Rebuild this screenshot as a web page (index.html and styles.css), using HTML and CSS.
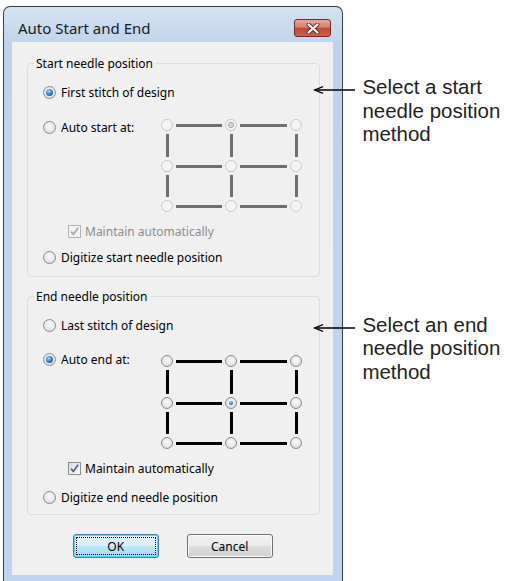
FILE: index.html
```html
<!DOCTYPE html>
<html lang="en">
<head>
    <meta charset="UTF-8">
    <title>Auto Start and End</title>
    <link rel="stylesheet" href="styles.css">
</head>
<body>
<div class="page">
    <div class="window">
        <div class="titlebar">
            <span class="title">Auto Start and End</span>
            <span class="close">
                <svg width="14" height="11" viewBox="0 0 14 11">
                    <path d="M2.5 1.5 L11.5 9.5 M11.5 1.5 L2.5 9.5" stroke="#5a2a24" stroke-width="4" stroke-linecap="round"/>
                    <path d="M2.5 1.5 L11.5 9.5 M11.5 1.5 L2.5 9.5" stroke="#fff" stroke-width="2.2" stroke-linecap="round"/>
                </svg>
            </span>
        </div>
        <div class="client">
            <fieldset class="group group-start">
                <legend>Start needle position</legend>
                <div class="option"><span class="radio on"></span>First stitch of design</div>
                <div class="auto">
                    <div class="option"><span class="radio"></span>Auto start at:</div>
                    <div class="grid off">
                        <span class="radio"></span><span class="h"></span><span class="radio on"></span><span class="h"></span><span class="radio"></span>
                        <span class="v"></span><span></span><span class="v"></span><span></span><span class="v"></span>
                        <span class="radio"></span><span class="h"></span><span class="radio"></span><span class="h"></span><span class="radio"></span>
                        <span class="v"></span><span></span><span class="v"></span><span></span><span class="v"></span>
                        <span class="radio"></span><span class="h"></span><span class="radio"></span><span class="h"></span><span class="radio"></span>
                    </div>
                </div>
                <div class="option check disabled">
                    <span class="box"><svg width="11" height="11" viewBox="0 0 11 11"><path d="M2 5.6 L4.4 8.4 L9.2 1.8" fill="none" stroke="currentColor" stroke-width="1.7"/></svg></span>Maintain automatically
                </div>
                <div class="option last"><span class="radio"></span>Digitize start needle position</div>
            </fieldset>

            <fieldset class="group group-end">
                <legend>End needle position</legend>
                <div class="option"><span class="radio"></span>Last stitch of design</div>
                <div class="auto">
                    <div class="option"><span class="radio on"></span>Auto end at:</div>
                    <div class="grid">
                        <span class="radio"></span><span class="h"></span><span class="radio"></span><span class="h"></span><span class="radio"></span>
                        <span class="v"></span><span></span><span class="v"></span><span></span><span class="v"></span>
                        <span class="radio"></span><span class="h"></span><span class="radio on"></span><span class="h"></span><span class="radio"></span>
                        <span class="v"></span><span></span><span class="v"></span><span></span><span class="v"></span>
                        <span class="radio"></span><span class="h"></span><span class="radio"></span><span class="h"></span><span class="radio"></span>
                    </div>
                </div>
                <div class="option check">
                    <span class="box"><svg width="11" height="11" viewBox="0 0 11 11"><path d="M2 5.6 L4.4 8.4 L9.2 1.8" fill="none" stroke="currentColor" stroke-width="1.7"/></svg></span>Maintain automatically
                </div>
                <div class="option last"><span class="radio"></span>Digitize end needle position</div>
            </fieldset>

            <div class="buttons">
                <button class="btn default">OK</button>
                <button class="btn">Cancel</button>
            </div>
        </div>
    </div>

    <div class="notes">
        <div class="note">
            <svg width="42" height="10" viewBox="0 0 42 10">
                <path d="M1.5 5 H42" stroke="#000" stroke-width="1.6"/>
                <path d="M10 1.6 L1.5 5 L10 8.4" fill="none" stroke="#000" stroke-width="1.3"/>
            </svg>
            <p>Select a start needle position method</p>
        </div>
        <div class="note note-end">
            <svg width="42" height="10" viewBox="0 0 42 10">
                <path d="M1.5 5 H42" stroke="#000" stroke-width="1.6"/>
                <path d="M10 1.6 L1.5 5 L10 8.4" fill="none" stroke="#000" stroke-width="1.3"/>
            </svg>
            <p>Select an end needle position method</p>
        </div>
    </div>
</div>
</body>
</html>
```

FILE: styles.css
```css
html, body {
    margin: 0;
    height: 100%;
    overflow: hidden;
    background: #fff;
}

body {
    font-family: "Noto Sans", sans-serif;
    font-size: 12px;
    color: #000;
}

.page {
    display: flex;
    align-items: flex-start;
}

/* window frame */
.window {
    margin: 6px 0 0 3px;
    width: 341px;
    height: 575px;
    box-sizing: border-box;
    border: 1px solid #2f3f52;
    border-bottom: 0;
    border-radius: 7px 7px 0 0;
    padding: 0 9px 0 8px;
    background: linear-gradient(#d5e3f2, #bfd4ec 36px, #bfd5ee);
}

.titlebar {
    height: 35px;
    box-sizing: border-box;
    padding: 7px 2px 0 6px;
    display: flex;
    align-items: center;
    justify-content: space-between;
}

.title {
    font-size: 15px;
    color: #1a1a1a;
}

.close {
    width: 37px;
    height: 18px;
    box-sizing: border-box;
    border: 1px solid #6d2a25;
    border-radius: 3px;
    background: linear-gradient(#e9aa9a, #d6806c 45%, #c14a31 52%, #d2614a);
    display: flex;
    align-items: center;
    justify-content: center;
}

.client {
    height: 533px;
    box-sizing: border-box;
    background: #f0f0f0;
    padding-top: 14px;
}

/* group boxes */
.group {
    margin: 0 13px 0 15px;
    padding: 14px 0 10px 15px;
    border: 1px solid #d5dfe5;
    border-radius: 4px;
    display: flex;
    flex-direction: column;
    align-items: flex-start;
}

.group legend {
    margin-left: -9px;
    padding: 0 2px;
    line-height: 15px;
}

.group-start {
    padding-bottom: 11px;
}

.group-end {
    margin-top: 12px;
    padding-bottom: 9px;
}

.option {
    display: flex;
    align-items: center;
    gap: 5px;
    height: 15px;
    white-space: nowrap;
}

.auto {
    display: flex;
    align-items: flex-start;
    margin-top: 19px;
}

.auto .option {
    width: 118px;
    margin-top: 1px;
}

.group-end .auto {
    margin-top: 22px;
}

.group-end .auto .option {
    margin-top: -3px;
}

.check {
    margin: 12px 0 0 25px;
    gap: 4px;
}

.last {
    margin-top: 11px;
}

.group-end .last {
    margin-top: 14px;
}

.disabled {
    color: #8d8d8d;
}

/* radio buttons */
.radio {
    flex: none;
    position: relative;
    width: 13px;
    height: 13px;
    box-sizing: border-box;
    border-radius: 50%;
    border: 1px solid #8b8b8b;
    background: radial-gradient(circle at 50% 40%, #fbfbfb, #e8e8e8 55%, #d2d2d2);
}

.radio.on::after {
    content: "";
    position: absolute;
    inset: 2px;
    border-radius: 50%;
    background: radial-gradient(circle at 40% 35%, #a6ddfb, #2b86d6 45%, #0d3f7e);
}

/* check boxes */
.box {
    flex: none;
    width: 13px;
    height: 13px;
    box-sizing: border-box;
    border: 1px solid #8e8f8f;
    background: linear-gradient(135deg, #dcdcdc, #fcfcfc);
    color: #4a5d94;
    display: flex;
    align-items: center;
    justify-content: center;
}

.disabled .box {
    border-color: #b5b5b5;
    background: #f4f4f4;
    color: #a9a9a9;
}

/* position grid */
.grid {
    display: grid;
    grid-template-columns: 12px 52px 12px 53px 12px;
    grid-template-rows: 12px 29px 12px 28px 12px;
}

.group-end .grid {
    grid-template-rows: 12px 30px 12px 28px 12px;
}

.grid .radio {
    width: 12px;
    height: 12px;
}

.grid .radio.on::after {
    inset: 3px;
}

.grid .h {
    height: 3px;
    align-self: center;
    margin: 0 3px;
    background: #000;
}

.grid .v {
    width: 3px;
    justify-self: center;
    margin: 3px 0;
    background: #000;
}

.grid.off .h,
.grid.off .v {
    background: #6f6f6f;
}

.grid.off .radio {
    border-color: #c9c9c9;
    background: #f4f4f4;
}

.grid.off .radio.on::after {
    inset: 2px;
    border: 1px solid #9a9a9a;
    background: radial-gradient(circle, #cfcfcf 30%, #f0f0f0 70%);
}

/* buttons */
.buttons {
    display: flex;
    justify-content: center;
    gap: 28px;
    margin-top: 19px;
}

.btn {
    width: 86px;
    height: 24px;
    padding: 0;
    font: inherit;
    color: #000;
    border: 1px solid #707070;
    border-radius: 3px;
    background: linear-gradient(#f2f2f2, #ebebeb 48%, #dddddd 52%, #cfcfcf);
    box-shadow: inset 0 0 0 1px #fbfbfb;
}

.btn.default {
    border-color: #3c7fb1;
    background: linear-gradient(#eaf6fd, #d9f0fc 48%, #bee6fd 52%, #a7d9f5);
    box-shadow: inset 0 0 0 1px #5bd2f8;
    outline: 1px dotted #000;
    outline-offset: -4px;
}

/* callouts */
.notes {
    margin-left: -30px;
    padding-top: 75px;
    width: 196px;
}

.note {
    display: flex;
    align-items: flex-start;
    font-family: "Liberation Sans", Arial, sans-serif;
    font-size: 20.5px;
    line-height: 23.5px;
    color: #231f20;
}

.note svg {
    flex: none;
    margin-top: 10px;
}

.note p {
    margin: 0 0 0 7px;
}

.note-end {
    margin-top: 167px;
}
```
